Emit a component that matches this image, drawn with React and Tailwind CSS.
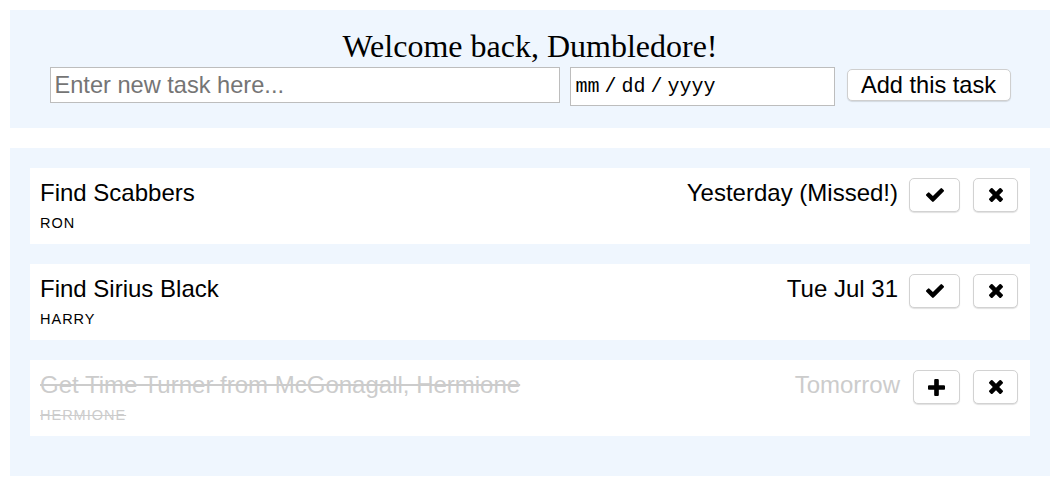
import React from "react";

const sans = { fontFamily: '"Liberation Sans", Arial, Helvetica, sans-serif' };

function CheckIcon() {
  return (
    <svg width="18" height="14" viewBox="121 334 1550 1188" fill="currentColor">
      <path d="M1671 566q0 40-28 68l-724 724-136 136q-28 28-68 28t-68-28l-136-136-362-362q-28-28-28-68t28-68l136-136q28-28 68-28t68 28l294 295 656-657q28-28 68-28t68 28l136 136q28 28 28 68z" />
    </svg>
  );
}

function TimesIcon() {
  return (
    <svg width="14" height="14" viewBox="110 366 1188 1188" fill="currentColor">
      <path d="M1298 1322q0 40-28 68l-136 136q-28 28-68 28t-68-28l-294-294-294 294q-28 28-68 28t-68-28l-136-136q-28-28-28-68t28-68l294-294-294-294q-28-28-28-68t28-68l136-136q28-28 68-28t68 28l294 294 294-294q28-28 68-28t68 28l136 136q28 28 28 68t-28 68l-294 294 294 294q28 28 28 68z" />
    </svg>
  );
}

function PlusIcon() {
  return (
    <svg width="17" height="17" viewBox="0 192 1408 1408" fill="currentColor">
      <path d="M1408 800v192q0 40-28 68t-68 28h-416v416q0 40-28 68t-68 28h-192q-40 0-68-28t-28-68v-416h-416q-40 0-68-28t-28-68v-192q0-40 28-68t68-28h416v-416q0-40 28-68t68-28h192q40 0 68 28t28 68v416h416q40 0 68 28t28 68z" />
    </svg>
  );
}

function IconButton({ children, w }) {
  return (
    <button
      className={`${w} h-[34px] flex items-center justify-center rounded-[5px] border border-[#d2d2d2] bg-white text-black shadow-[0_1px_1px_rgba(0,0,0,0.12)]`}
    >
      {children}
    </button>
  );
}

function TaskCard({ title, who, date, done }) {
  return (
    <div className="bg-white h-[76px] pl-[10px] pr-[12px] pt-[10px] flex justify-between items-start" style={sans}>
      <div className={`mt-[1px] ${done ? "text-[#cccccc] line-through" : "text-black"}`}>
        <div className="text-[24px] leading-[27px]">{title}</div>
        <div className="text-[14.5px] leading-[16px] mt-[9px] uppercase tracking-[1px]">{who}</div>
      </div>
      <div className="flex items-start">
        <div className={`mt-[1px] text-[24px] leading-[27px] ${done ? "text-[#cccccc]" : "text-black"}`}>{date}</div>
        {done ? (
          <div className="ml-[13px]">
            <IconButton w="w-[47px]"><PlusIcon /></IconButton>
          </div>
        ) : (
          <div className="ml-[11px]">
            <IconButton w="w-[51px]"><CheckIcon /></IconButton>
          </div>
        )}
        <div className="ml-[13px]">
          <IconButton w="w-[45px]"><TimesIcon /></IconButton>
        </div>
      </div>
    </div>
  );
}

export default function App() {
  return (
    <div className="bg-white w-[1064px] h-[482px] pt-[10px] pl-[10px]">
      <div className="w-[1040px] h-[118px] bg-[#eff6fe] pt-[18px]">
        <h1
          className="text-center text-[32px] leading-[37px] font-normal text-black"
          style={{ fontFamily: '"Liberation Serif", "Times New Roman", serif' }}
        >
          Welcome back, Dumbledore!
        </h1>
        <div className="flex justify-center items-start mt-[2px]" style={sans}>
          <input
            type="text"
            placeholder="Enter new task here..."
            className="w-[510px] h-[36px] border border-[#bdbdbd] bg-white px-[4px] text-[23.6px] text-black placeholder:text-[#757575] outline-none"
            style={sans}
          />
          <div
            className="ml-[10px] w-[265px] h-[39px] border border-[#bdbdbd] bg-white pl-[5px] flex items-center text-[20px] text-black"
            style={{ fontFamily: '"Liberation Mono", "Courier New", monospace' }}
          >
            <span>mm</span>
            <span className="mx-[5px]">/</span>
            <span>dd</span>
            <span className="mx-[5px]">/</span>
            <span>yyyy</span>
          </div>
          <button
            className="ml-[12px] mt-[2px] w-[164px] h-[32px] rounded-[5px] border border-[#cfcfcf] bg-white text-[23.6px] leading-[30px] text-black shadow-[0_1px_1px_rgba(0,0,0,0.12)]"
            style={sans}
          >
            Add this task
          </button>
        </div>
      </div>
      <div className="w-[1040px] mt-[20px] bg-[#eff6fe] pt-[20px] px-[20px] pb-[40px] flex flex-col gap-[20px]">
        <TaskCard title="Find Scabbers" who="Ron" date="Yesterday (Missed!)" />
        <TaskCard title="Find Sirius Black" who="Harry" date="Tue Jul 31" />
        <TaskCard title="Get Time Turner from McGonagall, Hermione" who="Hermione" date="Tomorrow" done />
      </div>
    </div>
  );
}
